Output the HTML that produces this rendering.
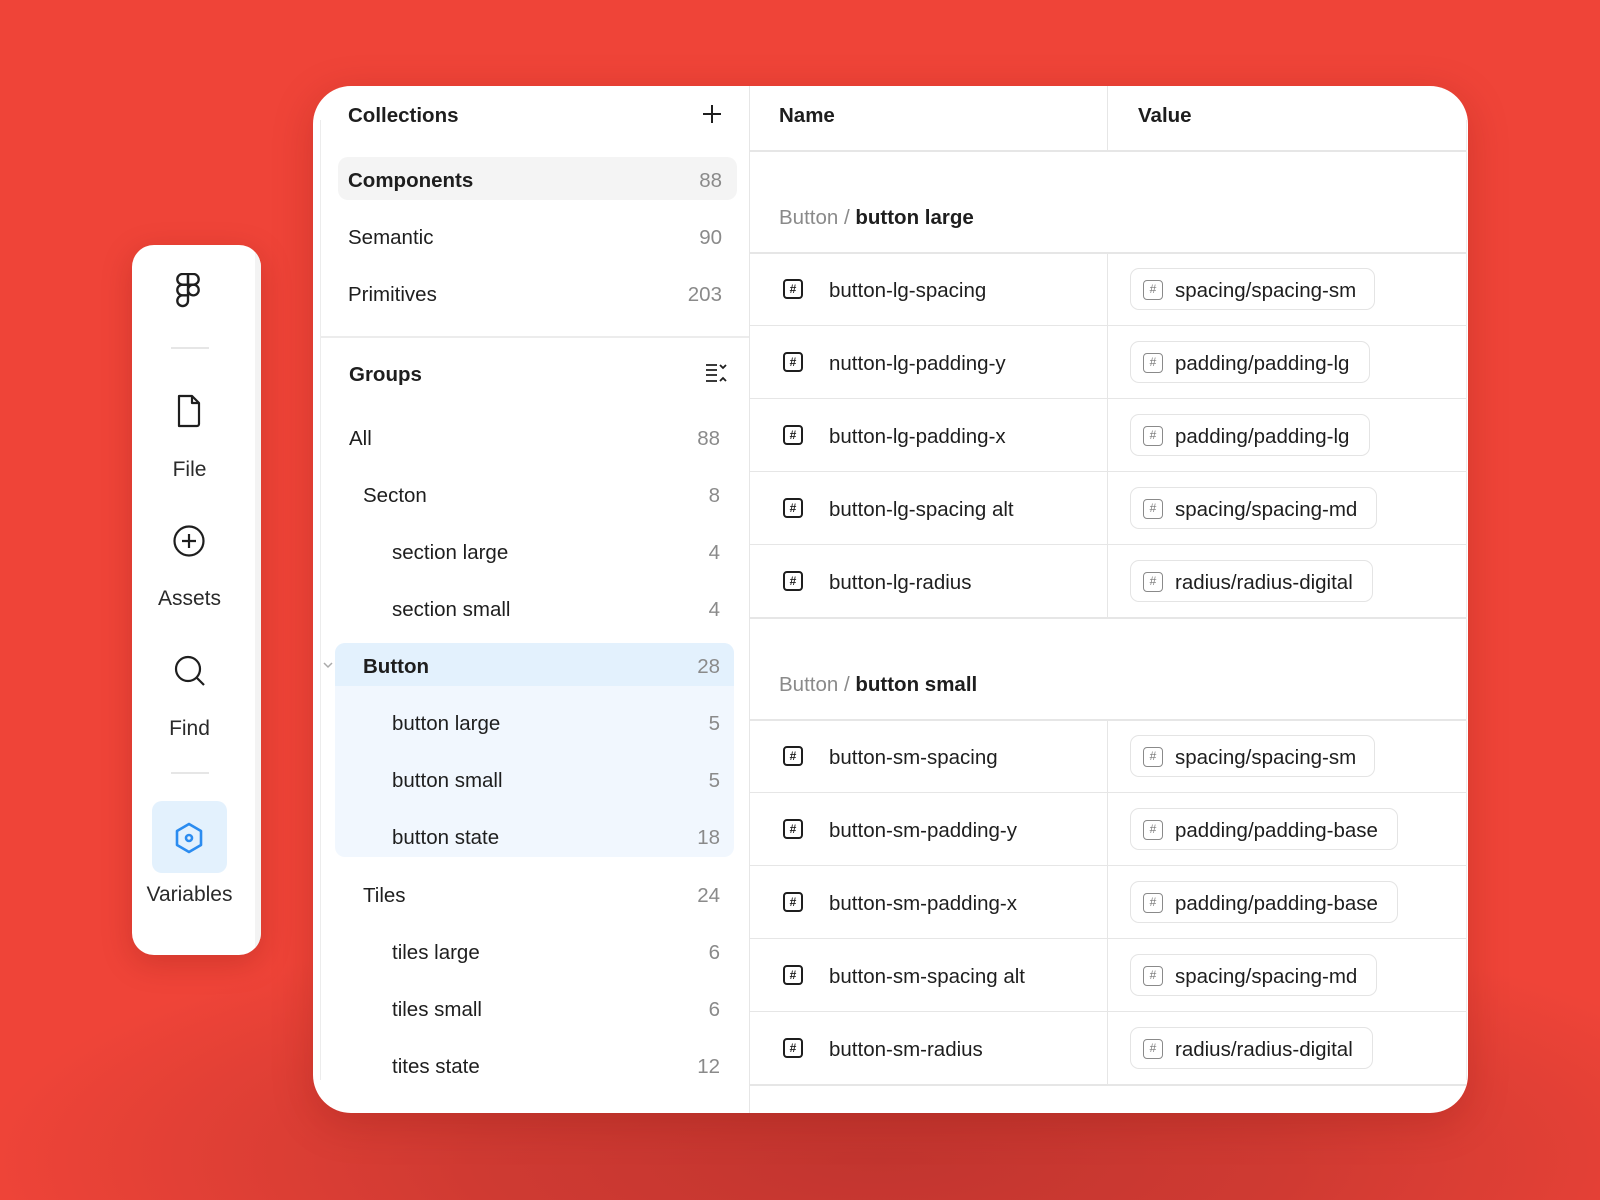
<!DOCTYPE html>
<html><head><meta charset="utf-8">
<style>
*{margin:0;padding:0;box-sizing:border-box}
body{width:1600px;height:1200px;overflow:hidden;position:relative;font-family:"Liberation Sans",sans-serif;color:#1e1e1e;
background:radial-gradient(ellipse 900px 260px at 880px 1160px,#c2352f 0%,#cf3a32 45%,rgba(239,68,56,0) 100%),#ef4438;}
.a{position:absolute}
.t{position:absolute;font-size:20.5px;line-height:24px;white-space:nowrap;transform:translateY(2px)}
.b{font-weight:bold}
.n{position:absolute;font-size:20.5px;line-height:24px;color:#8a8a8a;text-align:right;width:80px;transform:translateY(2px)}
.side{left:132px;top:245px;width:129px;height:710px;background:#fff;border-radius:22px;box-shadow:0 8px 30px rgba(120,20,10,.25);overflow:hidden}
.lbl{position:absolute;left:132px;width:115px;text-align:center;font-size:21px;line-height:24px;color:#2a2a2a}
.card{left:313px;top:86px;width:1155px;height:1027px;background:#fff;border-radius:38px;overflow:hidden;box-shadow:0 10px 40px rgba(120,20,10,.25)}
.hl{position:absolute;height:1px;background:#e6e6e6}
.vl{position:absolute;width:1px;background:#e6e6e6}
.ic{position:absolute;width:20px;height:20px;border:2px solid #1e1e1e;border-radius:4px;font-size:12px;line-height:16px;text-align:center;font-weight:bold}
.pill{position:absolute;left:1130px;height:42px;border:1px solid #e4e4e4;border-radius:9px;background:#fff}
.pill .pi{position:absolute;left:12px;top:11px;width:20px;height:20px;border:1.5px solid #8a8a8a;border-radius:4px;font-size:12px;line-height:17px;text-align:center;color:#777}
.pill span{position:absolute;left:44px;top:10px;font-size:20.5px;line-height:24px;white-space:nowrap;color:#1e1e1e}
</style></head><body>

<!-- sidebar -->
<div class="a side"><div class="a" style="right:0;top:0;width:6px;height:100%;background:#f3f3f3"></div></div>
<svg class="a" style="left:176px;top:273px" width="24" height="35" viewBox="0 0 24 36" fill="none" stroke="#1e1e1e" stroke-width="2.4">
<path d="M12 1H6.5a5.5 5.5 0 0 0 0 11H12z"/><path d="M12 1h5.5a5.5 5.5 0 0 1 0 11H12z"/><path d="M12 12H6.5a5.5 5.5 0 0 0 0 11H12z"/><circle cx="17.5" cy="17.5" r="5.5"/><path d="M12 23H6.5a5.5 5.5 0 1 0 5.5 5.5z"/></svg>
<div class="a" style="left:171px;top:347px;width:38px;height:2px;background:#e6e6e6"></div>
<svg class="a" style="left:176px;top:394px" width="26" height="34" viewBox="0 0 26 34" fill="none" stroke="#1e1e1e" stroke-width="2.2" stroke-linejoin="round"><path d="M3 2h13l7 7v21a2 2 0 0 1-2 2H3z"/><path d="M16 2v7h7"/></svg>
<div class="lbl" style="top:458px;left:132px">File</div>
<svg class="a" style="left:173px;top:525px" width="32" height="32" viewBox="0 0 32 32" fill="none" stroke="#1e1e1e" stroke-width="2.2"><circle cx="16" cy="16" r="14.5"/><path d="M16 9v14M9 16h14"/></svg>
<div class="lbl" style="top:587px">Assets</div>
<svg class="a" style="left:174px;top:655px" width="32" height="32" viewBox="0 0 32 32" fill="none" stroke="#1e1e1e" stroke-width="2.2"><circle cx="14" cy="14" r="12"/><path d="M23 23l7 7"/></svg>
<div class="lbl" style="top:717px">Find</div>
<div class="a" style="left:171px;top:772px;width:38px;height:2px;background:#e6e6e6"></div>
<div class="a" style="left:152px;top:801px;width:75px;height:72px;background:#e3f1fd;border-radius:10px"></div>
<svg class="a" style="left:174px;top:822px" width="30" height="32" viewBox="0 0 30 32" fill="none" stroke="#2b8cf0" stroke-width="2.6" stroke-linejoin="round"><path d="M15 2l12 7v14l-12 7-12-7V9z"/><circle cx="15" cy="16" r="3"/></svg>
<div class="lbl" style="top:883px;left:132px">Variables</div>

<!-- main card -->
<div class="a card"></div>
<div class="vl" style="left:320px;top:120px;height:960px;background:#ececec"></div>
<div class="vl" style="left:749px;top:86px;height:1027px"></div>
<div class="hl" style="left:320px;top:336px;width:429px;height:2px;background:#ececec"></div>

<div class="t b" style="left:348px;top:102px">Collections</div>
<svg class="a" style="left:702px;top:104px" width="20" height="20" viewBox="0 0 20 20" stroke="#1e1e1e" stroke-width="2"><path d="M10 1v18M1 10h18"/></svg>
<div class="a" style="left:338px;top:157px;width:399px;height:43px;background:#f4f4f4;border-radius:10px"></div>
<div class="t b" style="left:348px;top:167px">Components</div><div class="n" style="left:642px;top:167px">88</div>
<div class="t" style="left:348px;top:224px">Semantic</div><div class="n" style="left:642px;top:224px">90</div>
<div class="t" style="left:348px;top:281px">Primitives</div><div class="n" style="left:642px;top:281px">203</div>

<div class="t b" style="left:349px;top:361px">Groups</div>
<svg class="a" style="left:705px;top:363px" width="24" height="20" viewBox="0 0 24 20" fill="none" stroke="#1e1e1e" stroke-width="1.8"><path d="M1 2h11M1 7h11M1 12h11M1 18h11M15 2l3 3 3-3M15 18l3-3 3 3"/></svg>

<div class="a" style="left:335px;top:643px;width:399px;height:214px;background:#f1f7fe;border-radius:10px"></div>
<div class="a" style="left:335px;top:643px;width:399px;height:43px;background:#e3f1fd;border-radius:10px 10px 0 0"></div>
<svg class="a" style="left:322px;top:661px" width="12" height="8" viewBox="0 0 12 8" fill="none" stroke="#aaa" stroke-width="1.5"><path d="M2 2l4 4 4-4"/></svg>

<div class="t" style="left:349px;top:425px">All</div><div class="n" style="left:640px;top:425px">88</div>
<div class="t" style="left:363px;top:482px">Secton</div><div class="n" style="left:640px;top:482px">8</div>
<div class="t" style="left:392px;top:539px">section large</div><div class="n" style="left:640px;top:539px">4</div>
<div class="t" style="left:392px;top:596px">section small</div><div class="n" style="left:640px;top:596px">4</div>
<div class="t b" style="left:363px;top:653px">Button</div><div class="n" style="left:640px;top:653px">28</div>
<div class="t" style="left:392px;top:710px">button large</div><div class="n" style="left:640px;top:710px">5</div>
<div class="t" style="left:392px;top:767px">button small</div><div class="n" style="left:640px;top:767px">5</div>
<div class="t" style="left:392px;top:824px">button state</div><div class="n" style="left:640px;top:824px">18</div>
<div class="t" style="left:363px;top:882px">Tiles</div><div class="n" style="left:640px;top:882px">24</div>
<div class="t" style="left:392px;top:939px">tiles large</div><div class="n" style="left:640px;top:939px">6</div>
<div class="t" style="left:392px;top:996px">tiles small</div><div class="n" style="left:640px;top:996px">6</div>
<div class="t" style="left:392px;top:1053px">tites state</div><div class="n" style="left:640px;top:1053px">12</div>

<!-- table -->
<div class="t b" style="left:779px;top:102px">Name</div>
<div class="t b" style="left:1138px;top:102px">Value</div>
<div class="hl" style="left:749px;top:150px;width:717px;height:2px"></div>
<div class="vl" style="left:1107px;top:86px;height:65px"></div>
<div class="vl" style="left:1466px;top:120px;height:960px;background:#ececec"></div>

<div class="t" style="left:779px;top:204px;color:#8a8a8a">Button / <span class="b" style="color:#1e1e1e">button large</span></div>
<div class="hl" style="left:749px;top:252px;width:717px;height:2px"></div>
<div class="vl" style="left:1107px;top:252px;height:366px"></div>
<div class="hl" style="left:749px;top:325px;width:717px"></div>
<div class="hl" style="left:749px;top:398px;width:717px"></div>
<div class="hl" style="left:749px;top:471px;width:717px"></div>
<div class="hl" style="left:749px;top:544px;width:717px"></div>
<div class="hl" style="left:749px;top:617px;width:717px;height:2px"></div>

<div class="ic" style="left:783px;top:279px">#</div><div class="t" style="left:829px;top:277px">button-lg-spacing</div>
<div class="pill" style="top:268px;width:245px"><div class="pi">#</div><span>spacing/spacing-sm</span></div>
<div class="ic" style="left:783px;top:352px">#</div><div class="t" style="left:829px;top:350px">nutton-lg-padding-y</div>
<div class="pill" style="top:341px;width:240px"><div class="pi">#</div><span>padding/padding-lg</span></div>
<div class="ic" style="left:783px;top:425px">#</div><div class="t" style="left:829px;top:423px">button-lg-padding-x</div>
<div class="pill" style="top:414px;width:240px"><div class="pi">#</div><span>padding/padding-lg</span></div>
<div class="ic" style="left:783px;top:498px">#</div><div class="t" style="left:829px;top:496px">button-lg-spacing alt</div>
<div class="pill" style="top:487px;width:247px"><div class="pi">#</div><span>spacing/spacing-md</span></div>
<div class="ic" style="left:783px;top:571px">#</div><div class="t" style="left:829px;top:569px">button-lg-radius</div>
<div class="pill" style="top:560px;width:243px"><div class="pi">#</div><span>radius/radius-digital</span></div>

<div class="t" style="left:779px;top:671px;color:#8a8a8a">Button / <span class="b" style="color:#1e1e1e">button small</span></div>
<div class="hl" style="left:749px;top:719px;width:717px;height:2px"></div>
<div class="vl" style="left:1107px;top:719px;height:366px"></div>
<div class="hl" style="left:749px;top:792px;width:717px"></div>
<div class="hl" style="left:749px;top:865px;width:717px"></div>
<div class="hl" style="left:749px;top:938px;width:717px"></div>
<div class="hl" style="left:749px;top:1011px;width:717px"></div>
<div class="hl" style="left:749px;top:1084px;width:717px;height:2px"></div>

<div class="ic" style="left:783px;top:746px">#</div><div class="t" style="left:829px;top:744px">button-sm-spacing</div>
<div class="pill" style="top:735px;width:245px"><div class="pi">#</div><span>spacing/spacing-sm</span></div>
<div class="ic" style="left:783px;top:819px">#</div><div class="t" style="left:829px;top:817px">button-sm-padding-y</div>
<div class="pill" style="top:808px;width:268px"><div class="pi">#</div><span>padding/padding-base</span></div>
<div class="ic" style="left:783px;top:892px">#</div><div class="t" style="left:829px;top:890px">button-sm-padding-x</div>
<div class="pill" style="top:881px;width:268px"><div class="pi">#</div><span>padding/padding-base</span></div>
<div class="ic" style="left:783px;top:965px">#</div><div class="t" style="left:829px;top:963px">button-sm-spacing alt</div>
<div class="pill" style="top:954px;width:247px"><div class="pi">#</div><span>spacing/spacing-md</span></div>
<div class="ic" style="left:783px;top:1038px">#</div><div class="t" style="left:829px;top:1036px">button-sm-radius</div>
<div class="pill" style="top:1027px;width:243px"><div class="pi">#</div><span>radius/radius-digital</span></div>

</body></html>
